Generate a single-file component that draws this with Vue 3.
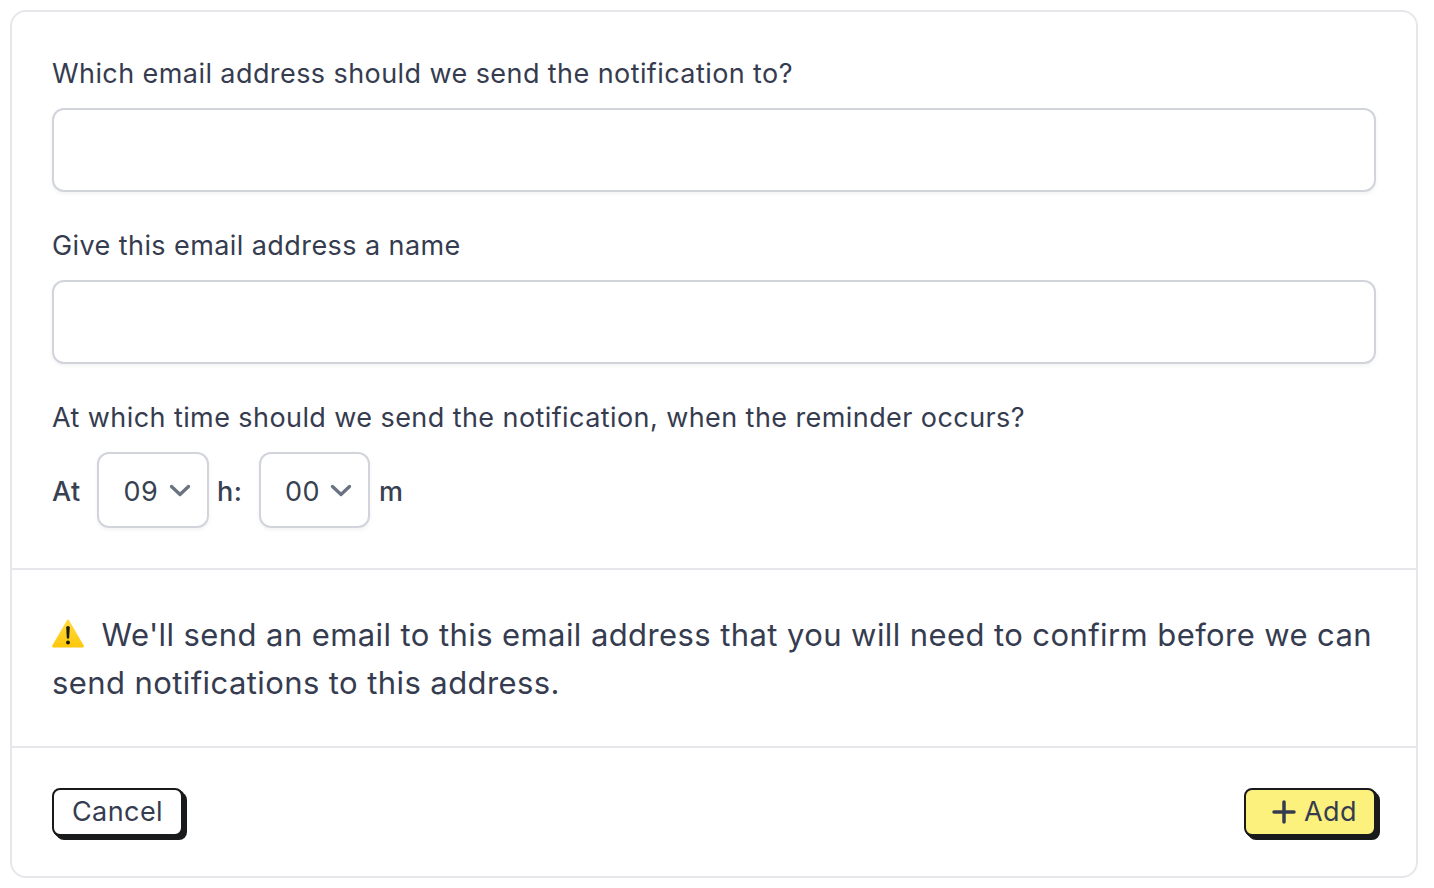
<script setup>
const hours = '09'
const minutes = '00'
</script>

<template>
  <form class="card" @submit.prevent>
    <section class="fields">
      <div class="field">
        <label for="email">Which email address should we send the notification to?</label>
        <input id="email" type="text" />
      </div>
      <div class="field">
        <label for="name">Give this email address a name</label>
        <input id="name" type="text" />
      </div>
      <div class="field">
        <p class="label">At which time should we send the notification, when the reminder occurs?</p>
        <div class="time">
          <span class="at">At</span>
          <button type="button" class="select first">
            <span>{{ hours }}</span>
            <svg width="22" height="14" viewBox="0 0 22 14"><path d="M2.500 2.500 11 10.500l8.500-8" /></svg>
          </button>
          <span class="h">h:</span>
          <button type="button" class="select second">
            <span>{{ minutes }}</span>
            <svg width="22" height="14" viewBox="0 0 22 14"><path d="M2.500 2.500 11 10.500l8.500-8" /></svg>
          </button>
          <span class="m">m</span>
        </div>
      </div>
    </section>
    <section class="notice">
      <svg class="warn" width="32" height="30" viewBox="0 0 32 30">
        <defs>
          <linearGradient id="sun" x1="0" y1="0" x2="0" y2="1">
            <stop offset="0" stop-color="#ffdc43" />
            <stop offset="1" stop-color="#fec60b" />
          </linearGradient>
        </defs>
        <path d="M14.800 1.500Q16 -.3 17.200 1.500L31.700 26.500Q32.300 28.500 30.800 28.500H1.200Q-.3 28.500 .3 26.500Z" fill="url(#sun)" />
        <path d="M14.200 8.500Q14.200 7 16 7T17.800 8.500L17.200 18.500Q17.100 19.700 16 19.700T14.800 18.500Z" fill="#1d1a05" />
        <circle cx="16" cy="23.500" r="2" fill="#1d1a05" />
      </svg>We'll send an email to this email address that you will need to confirm before we can send notifications to this address.
    </section>
    <section class="actions">
      <button type="button" class="btn cancel">Cancel</button>
      <button type="submit" class="btn add">
        <svg width="24" height="24" viewBox="0 0 24 24"><path d="M12 2v20M2 12h20" /></svg>
        <span>Add</span>
      </button>
    </section>
  </form>
</template>

<style>
body { background: #fff; }
</style>

<style scoped>
.card {
  box-sizing: border-box;
  width: 1408px;
  height: 868px;
  margin: 10px 0 0 10px;
  border: 2px solid #e5e7eb;
  border-radius: 16px;
  color: #374151;
  font-family: Inter, "Liberation Sans", sans-serif;
  font-size: 27px;
  line-height: 40px;
  letter-spacing: .42px;
}
.fields { box-sizing: border-box; height: 558px; padding: 42px 40px 0; border-bottom: 2px solid #e5e7eb; }
.field { height: 172px; }
.field label, .label { display: block; margin: 0; height: 54px; white-space: nowrap; color: #363c50; }
.field input {
  display: block;
  box-sizing: border-box;
  width: 1324px;
  height: 84px;
  border: 2px solid #d1d5db;
  border-radius: 12px;
  background: #fff;
  box-shadow: 0 2px 4px rgba(0, 0, 0, .05);
  outline: none;
}
.time { display: flex; align-items: center; height: 76px; }
.at, .h, .m { padding-top: 4px; font-weight: 450; }
.at { width: 45px; }
.h { width: 42px; margin-left: 8px; }
.m { margin-left: 9px; }
.select {
  box-sizing: border-box;
  display: flex;
  align-items: center;
  justify-content: space-between;
  width: 112px;
  height: 76px;
  padding: 4px 16px 0 24.500px;
  border: 2px solid #d1d5db;
  border-radius: 12px;
  background: #fff;
  color: inherit;
  font: inherit;
  letter-spacing: .42px;
  box-shadow: 0 2px 4px rgba(0, 0, 0, .05);
}
.second { width: 111px; padding-left: 24px; }
.select svg { margin-bottom: 2px; }
.select svg path { fill: none; stroke: #6b7280; stroke-width: 3.300; stroke-linecap: round; stroke-linejoin: round; }
.notice {
  box-sizing: border-box;
  height: 178px;
  padding: 41px 40px 0;
  border-bottom: 2px solid #e5e7eb;
  color: #363c50;
  font-size: 31px;
  line-height: 48px;
  letter-spacing: .41px;
}
.warn { margin-right: 17.500px; vertical-align: -3px; }
.actions { display: flex; justify-content: space-between; padding: 40px 40px 0 40px; }
.btn {
  box-sizing: border-box;
  display: flex;
  align-items: center;
  justify-content: center;
  width: 132px;
  height: 48px;
  padding: 0 0 1px;
  border: 2px solid #191a1b;
  border-radius: 8px;
  background: #fff;
  color: #363c50;
  font: inherit;
  letter-spacing: .42px;
  box-shadow: 1px 1px 0 #191a1b, 2px 2px 0 #191a1b, 4px 4px 0 #191a1b;
}
.cancel { width: 131px; }
.add { background: #fcf17c; gap: 8px; padding-left: 9px; }
.add svg path { stroke: #363c50; stroke-width: 3.500; stroke-linecap: round; }
</style>
